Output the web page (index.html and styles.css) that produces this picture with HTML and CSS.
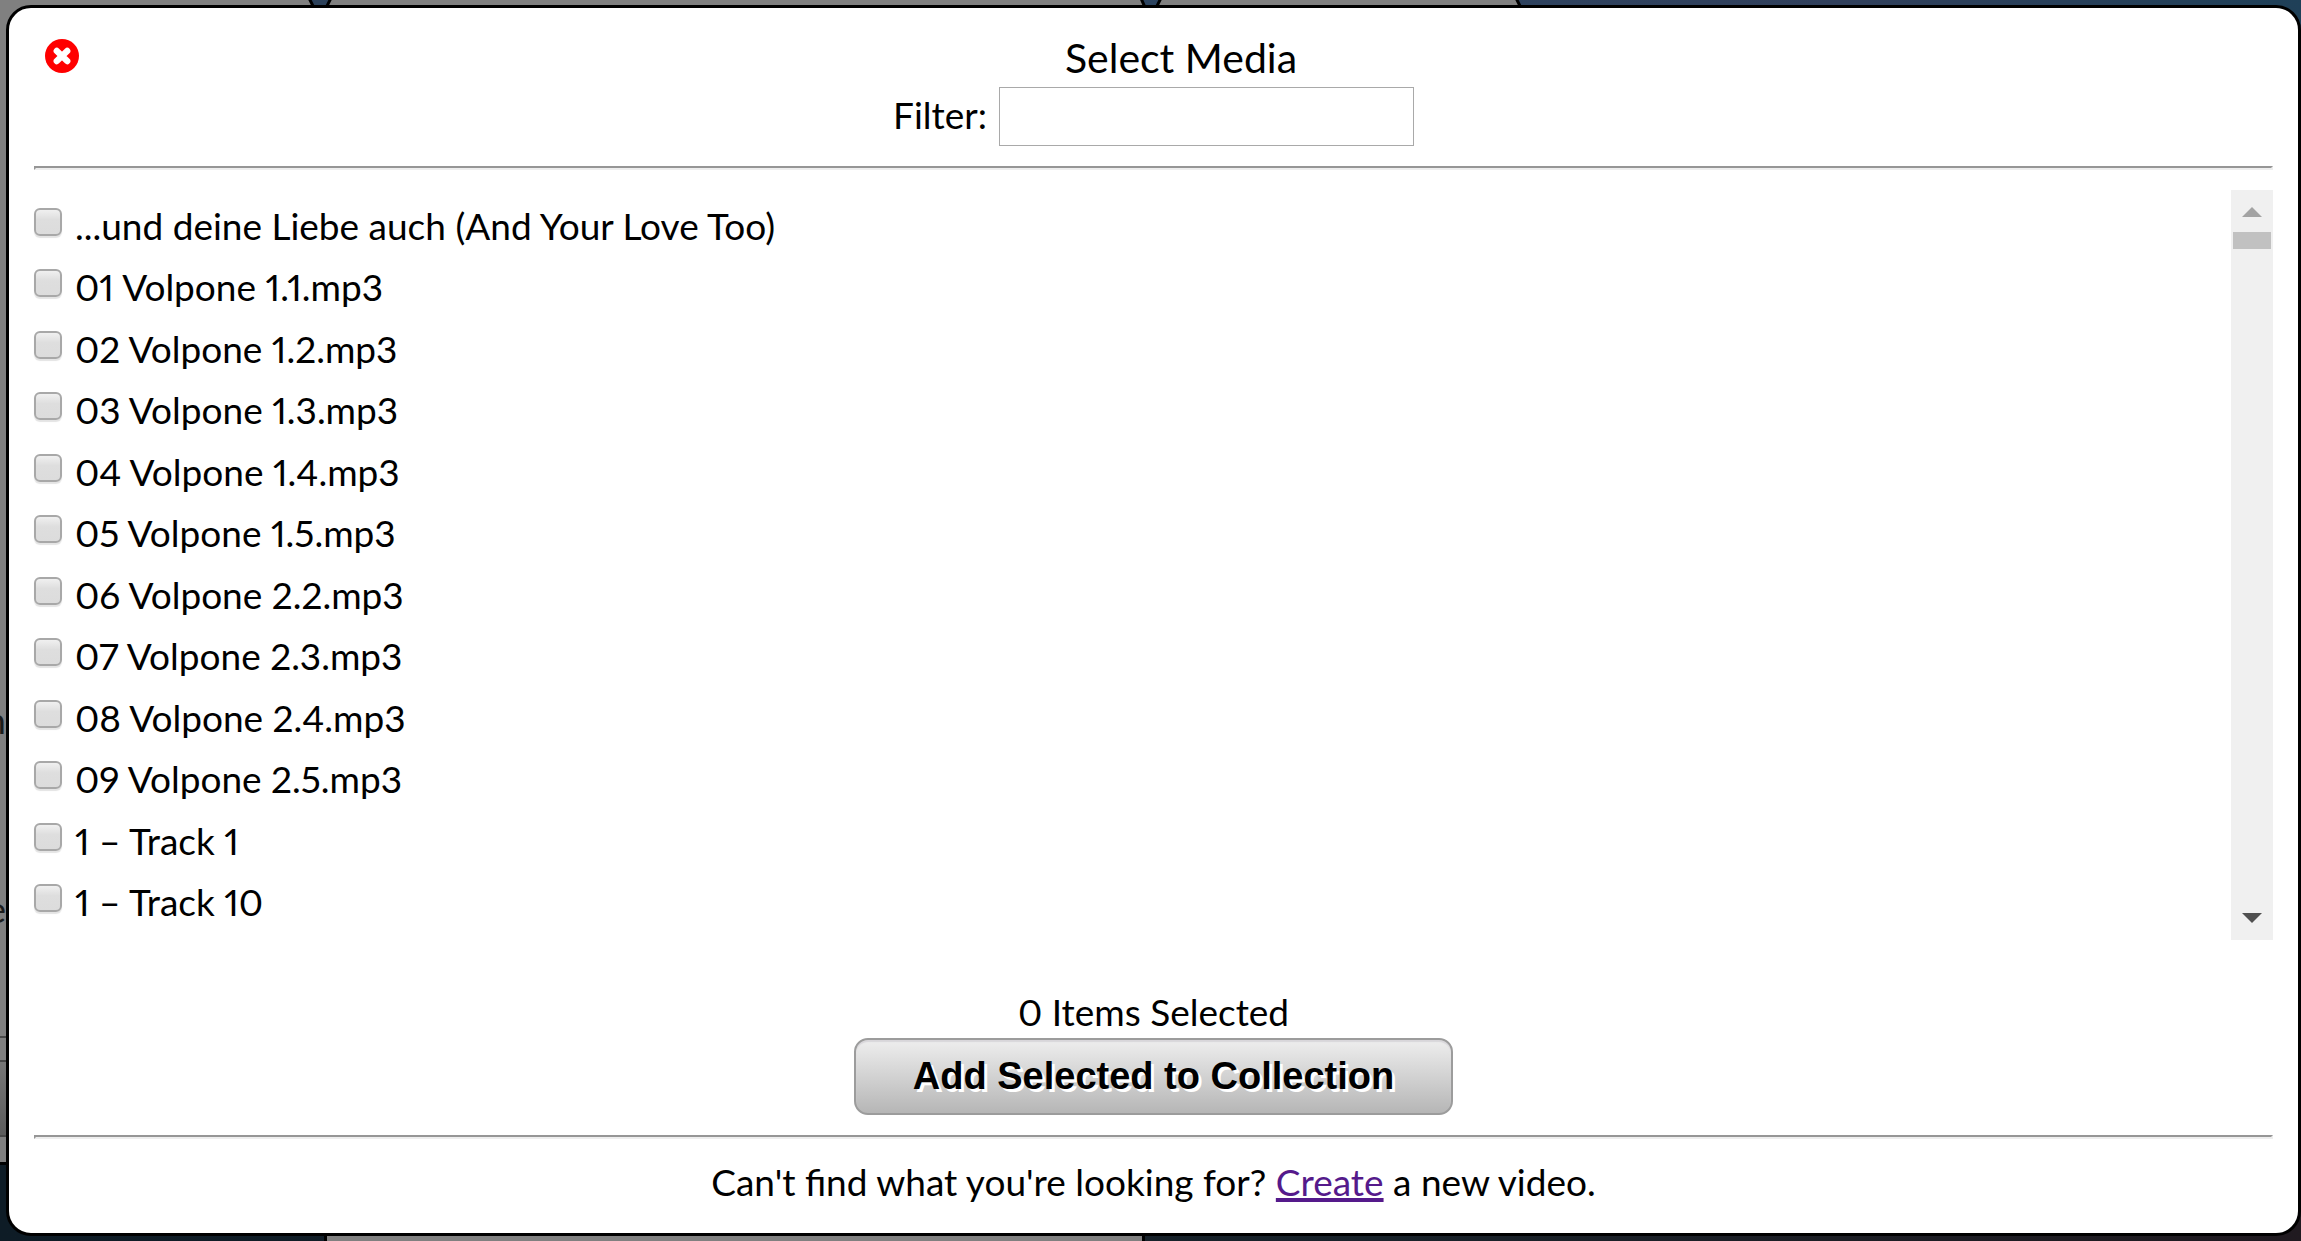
FILE: index.html
```html
<!DOCTYPE html>
<html lang="en">
<head>
<meta charset="utf-8">
<title>Select Media</title>
<link rel="stylesheet" href="styles.css">
</head>
<body>
<div class="backdrop" aria-hidden="true">
  <svg class="tabs" width="1525" height="8" viewBox="0 0 1525 8">
    <g fill="#808080" stroke="#000" stroke-width="3">
      <path d="M-4 -4H308L316 12H-4Z"/>
      <path d="M332 -4H1140L1147 12H324Z"/>
      <path d="M1162 -4H1515L1523 12H1154Z"/>
    </g>
  </svg>
  <div class="page-edge">
    <span class="edge-text edge-text-first">n</span>
    <span class="edge-text">e</span>
    <div class="edge-rule"></div>
    <div class="edge-button"></div>
  </div>
  <div class="page-foot"></div>
</div>

<main class="dialog" role="dialog" aria-labelledby="dialog-title">
  <header class="dialog-head">
    <button class="close" type="button" aria-label="Close">
      <svg width="34" height="34" viewBox="0 0 34 34">
        <circle cx="17" cy="17" r="17" fill="#f00"/>
        <path d="M11.8 12L22.2 22M22.2 12L11.8 22" stroke="#fff" stroke-width="6.4" stroke-linecap="round"/>
      </svg>
    </button>
    <h1 class="title" id="dialog-title">Select Media</h1>
  </header>
  <div class="filter">
    <label for="filter">Filter:</label>
    <input class="filter-input" id="filter" type="text">
  </div>
  <hr class="rule">
  <div class="media">
    <ul class="media-list">
      <li><label class="item"><input class="check" type="checkbox">...und deine Liebe auch (And Your Love Too)</label></li>
      <li><label class="item"><input class="check" type="checkbox">01 Volpone 1.1.mp3</label></li>
      <li><label class="item"><input class="check" type="checkbox">02 Volpone 1.2.mp3</label></li>
      <li><label class="item"><input class="check" type="checkbox">03 Volpone 1.3.mp3</label></li>
      <li><label class="item"><input class="check" type="checkbox">04 Volpone 1.4.mp3</label></li>
      <li><label class="item"><input class="check" type="checkbox">05 Volpone 1.5.mp3</label></li>
      <li><label class="item"><input class="check" type="checkbox">06 Volpone 2.2.mp3</label></li>
      <li><label class="item"><input class="check" type="checkbox">07 Volpone 2.3.mp3</label></li>
      <li><label class="item"><input class="check" type="checkbox">08 Volpone 2.4.mp3</label></li>
      <li><label class="item"><input class="check" type="checkbox">09 Volpone 2.5.mp3</label></li>
      <li><label class="item"><input class="check" type="checkbox">1 – Track 1</label></li>
      <li><label class="item"><input class="check" type="checkbox">1 – Track 10</label></li>
    </ul>
    <div class="scrollbar">
      <svg class="arrow" width="20" height="10" viewBox="0 0 20 10"><path d="M0 10L10 0L20 10Z" fill="#a3a3a3"/></svg>
      <div class="thumb"></div>
      <svg class="arrow arrow-down" width="20" height="10" viewBox="0 0 20 10"><path d="M0 0H20L10 10Z" fill="#505050"/></svg>
    </div>
  </div>
  <p class="count">0 Items Selected</p>
  <button class="add" type="button">Add Selected to Collection</button>
  <hr class="rule">
  <p class="hint">Can't find what you're looking for? <a class="link" href="#">Create</a> a new video.</p>
</main>
</body>
</html>
```
FILE: styles.css
```css
* {
  box-sizing: border-box;
}

body {
  margin: 0;
  min-height: 100vh;
  position: relative;
  display: flex;
  padding: 5px 0 5px 6px;
  background: #141c24;
  font: 37px/44px Lato, "Liberation Sans", sans-serif;
  font-variant-numeric: proportional-nums;
  color: #000;
}

/* Dimmed page behind the dialog */
.backdrop {
  position: absolute;
  inset: 0;
  overflow: hidden;
  background: linear-gradient(90deg, #2c4058, #2c4460 55%, #31405c 80%, #1f4058) 0 0 / 100% 50% no-repeat, linear-gradient(90deg, #0e1c26, #18222a 60%, #201a20);
}

.tabs {
  display: block;
}

.page-edge {
  height: 1157px;
  width: 20px;
  padding-right: 14px;
  background: #808080;
  border-bottom: 3px solid #000;
  display: flex;
  flex-direction: column;
  align-items: flex-end;
  color: #1c1c1c;
}

.edge-text {
  margin-top: 145px;
}

.edge-text-first {
  margin-top: 690px;
}

.edge-rule,
.edge-button {
  width: 20px;
  align-self: flex-start;
  border-top: 2px solid #484848;
}

.edge-rule {
  margin-top: 105px;
  height: 24px;
}

.edge-button {
  height: 77px;
  border-bottom: 2px solid #484848;
  background: linear-gradient(#777, #5c5c5c);
}

.edge-text,
.edge-rule,
.edge-button {
  flex: none;
}

.page-foot {
  height: 80px;
  width: 821px;
  margin-left: 324px;
  background: #808080;
  border: solid #000;
  border-width: 0 3px;
}

.dialog {
  position: relative;
  flex: 1;
  display: flex;
  flex-direction: column;
  padding: 26px 25px 29px;
  background: #fff;
  border: 3px solid #000;
  border-radius: 25px;
}

.dialog-head {
  display: flex;
  align-items: center;
}

.close {
  width: 55px;
  height: 34px;
  padding: 0 10px 0 11px;
  margin-bottom: 4px;
  border: 0;
  background: none;
}

.close svg {
  display: block;
}

.title {
  flex: 1;
  margin: 0;
  font-size: 41px;
  font-weight: 400;
  line-height: 48px;
  text-align: center;
}

.filter {
  display: flex;
  justify-content: center;
  align-items: center;
  gap: 12px;
  margin-top: 5px;
}

.filter label {
  padding-bottom: 4px;
}

.filter-input {
  width: 415px;
  height: 59px;
  padding: 0 8px;
  border: 1px solid #a9a9a9;
  background: #fff;
  font: inherit;
}

.rule {
  width: 100%;
  margin: 20px 0;
  border: 2px solid;
  border-color: #969696 #eee #eee #969696;
}

.media {
  flex: 1;
  display: flex;
}

.media-list {
  flex: 1;
  display: grid;
  grid-auto-rows: 1fr;
  margin: 0;
  padding: 5px 0 7px;
  list-style: none;
}

.media-list li,
.item {
  display: flex;
  align-items: center;
}

.item {
  gap: 13px;
}

.check {
  appearance: none;
  flex: none;
  width: 28px;
  height: 28px;
  margin: 0 0 8px;
  border: 2px solid #a8a8a8;
  border-radius: 6px;
  background: linear-gradient(#f0f0f0, #dedede 40%, #dcdcdc);
  box-shadow: 0 2px 1px #e4e4e4;
}

.scrollbar {
  width: 42px;
  display: flex;
  flex-direction: column;
  align-items: center;
  padding: 17px 0;
  background: #f0f0f0;
}

.thumb {
  width: 38px;
  height: 17px;
  margin-top: 15px;
  background: #c1c1c1;
}

.arrow-down {
  margin-top: auto;
}

.count,
.hint {
  margin: 0;
  text-align: center;
}

.count {
  margin: 50px 0 4px;
}

.hint {
  padding-top: 1px;
}

.add {
  align-self: center;
  width: 599px;
  height: 77px;
  padding: 0 0 2px;
  border: 2px solid #9c9c9c;
  border-radius: 14px;
  background: linear-gradient(#eee, #b6b6b6);
  box-shadow: inset 0 2px 1px #d8d6da;
  font: bold 38px/44px "Liberation Sans", Arial, sans-serif;
  color: #000;
  text-shadow: 3px 3px 0 #fff;
}

.link {
  color: #551a8b;
  text-decoration-thickness: 4px;
}
```
